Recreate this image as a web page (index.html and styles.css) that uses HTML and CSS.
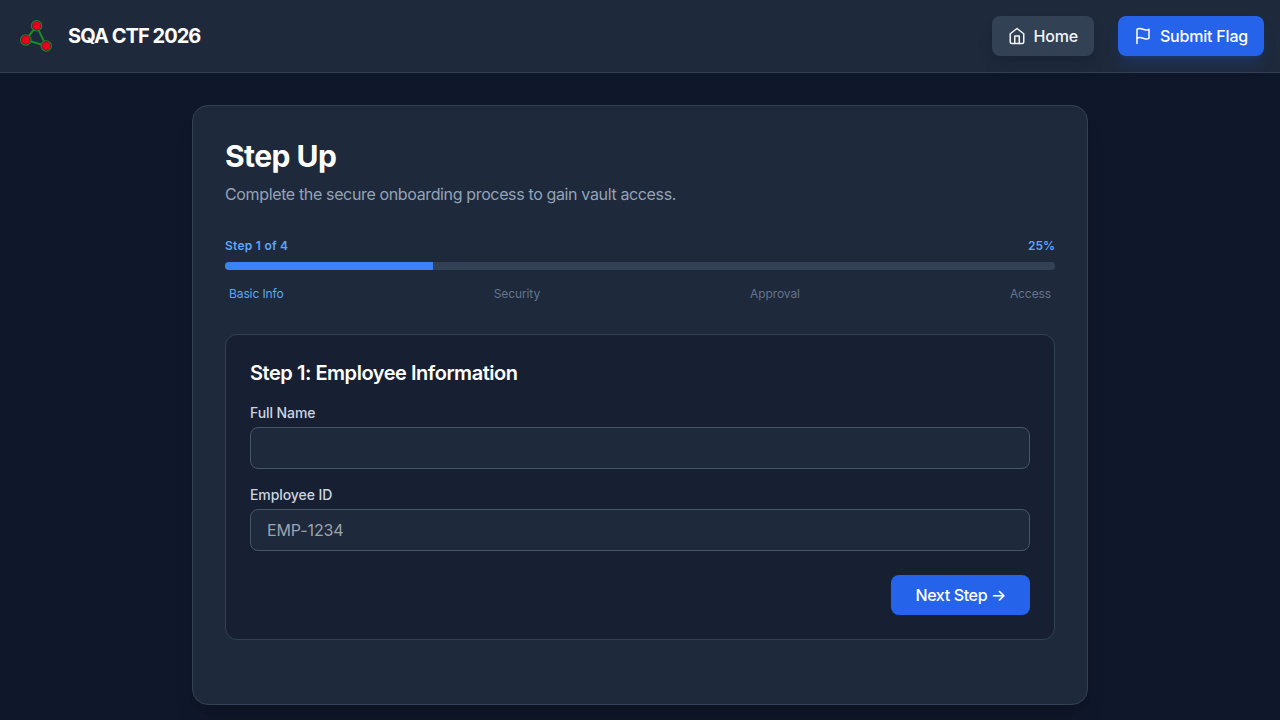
FILE: index.html
```html
<!DOCTYPE html>
<html lang="en">
<head>
  <meta charset="UTF-8" />
  <meta name="viewport" content="width=device-width, initial-scale=1.0" />
  <title>Step Up - SQA CTF 2026</title>
  <link rel="stylesheet" href="styles.css">
</head>
<body>
  <header class="navbar">
    <a href="#" class="brand">
      <svg class="logo" viewBox="0 0 40 40" fill="none">
        <path d="M20.6 9.8 L9.8 23.9 L30.2 30 Z" stroke="#1f8a26" stroke-width="2" />
        <g fill="#1e293b" stroke="#1f8a26" stroke-width="1.1">
          <circle cx="20.6" cy="9.8" r="5.2" />
          <circle cx="9.8" cy="23.9" r="5.2" />
          <circle cx="30.2" cy="30" r="5.2" />
        </g>
        <g fill="#e8001c">
          <circle cx="20.6" cy="9.8" r="4.1" />
          <circle cx="9.8" cy="23.9" r="4.1" />
          <circle cx="30.2" cy="30" r="4.1" />
        </g>
      </svg>
      <span>SQA CTF 2026</span>
    </a>
    <nav class="nav-links">
      <a href="#" class="btn btn-home">
        <svg class="icon" viewBox="0 0 24 24">
          <path d="M3 9l9-7 9 7v11a2 2 0 0 1-2 2H5a2 2 0 0 1-2-2z" />
          <path d="M9 22V12h6v10" />
        </svg>
        Home
      </a>
      <a href="#" class="btn btn-flag">
        <svg class="icon" viewBox="0 0 24 24">
          <path d="M4 15s1-1 4-1 5 2 8 2 4-1 4-1V3s-1 1-4 1-5-2-8-2-4 1-4 1z" />
          <path d="M4 22v-7" />
        </svg>
        Submit Flag
      </a>
    </nav>
  </header>

  <main class="container">
    <section class="card">
      <h1>Step Up</h1>
      <p class="subtitle">Complete the secure onboarding process to gain vault access.</p>

      <div class="progress">
        <div class="progress-head">
          <span class="step-count">Step 1 of 4</span>
          <span>25%</span>
        </div>
        <div class="progress-bar">
          <div class="progress-fill"></div>
        </div>
        <div class="progress-steps">
          <span class="active">Basic Info</span>
          <span>Security</span>
          <span>Approval</span>
          <span>Access</span>
        </div>
      </div>

      <form class="panel">
        <h2>Step 1: Employee Information</h2>
        <div class="field">
          <label for="fullName">Full Name</label>
          <input type="text" id="fullName">
        </div>
        <div class="field">
          <label for="employeeId">Employee ID</label>
          <input type="text" id="employeeId" placeholder="EMP-1234">
        </div>
        <div class="actions">
          <button type="button" class="btn-next">Next Step →</button>
        </div>
      </form>
    </section>
  </main>
</body>
</html>
```
FILE: styles.css
```css
* {
  box-sizing: border-box;
}
body {
  font-family: Inter, 'Liberation Sans', sans-serif;
  font-size: 16px;
  line-height: 24px;
  background: #0f172a;
  color: #fff;
  margin: 0;
  height: 100vh;
  overflow: hidden;
}
h1, h2, p {
  margin: 0;
}
a {
  color: inherit;
  text-decoration: none;
}
.navbar {
  display: flex;
  justify-content: space-between;
  align-items: center;
  height: 73px;
  padding: 0 16px;
  background: #1e293b;
  border-bottom: 1px solid #334155;
}
.brand {
  display: flex;
  align-items: center;
  gap: 12px;
  font-size: 20px;
  line-height: 28px;
  font-weight: 700;
  letter-spacing: -0.95px;
}
.logo {
  width: 40px;
  height: 40px;
}
.nav-links {
  display: flex;
  gap: 24px;
}
.btn {
  display: flex;
  align-items: center;
  gap: 8px;
  padding: 8px 16px;
  border-radius: 8px;
  font-weight: 500;
  letter-spacing: -0.2px;
}
.btn-home {
  background: #334155;
  color: #f1f5f9;
  box-shadow: 0 10px 15px -3px rgba(15, 23, 42, 0.2), 0 4px 6px -4px rgba(15, 23, 42, 0.2);
}
.btn-flag {
  background: #2563eb;
  box-shadow: 0 10px 15px -3px rgba(37, 99, 235, 0.2), 0 4px 6px -4px rgba(37, 99, 235, 0.2);
}
.icon {
  width: 18px;
  height: 18px;
  fill: none;
  stroke: currentColor;
  stroke-width: 2;
  stroke-linecap: round;
  stroke-linejoin: round;
}
.container {
  max-width: 896px;
  margin: 32px auto;
}
.card {
  min-height: 600px;
  padding: 32px;
  background: #1e293b;
  border: 1px solid #334155;
  border-radius: 16px;
  box-shadow: 0 20px 25px -5px rgba(0, 0, 0, 0.1), 0 8px 10px -6px rgba(0, 0, 0, 0.1);
}
h1 {
  font-size: 30px;
  line-height: 36px;
  font-weight: 700;
  letter-spacing: -0.55px;
}
.subtitle {
  margin-top: 8px;
  letter-spacing: -0.36px;
  color: #94a3b8;
}
.progress {
  margin: 32px 0;
  font-size: 12px;
  line-height: 16px;
}
.progress-head {
  display: flex;
  justify-content: space-between;
  color: #60a5fa;
  font-weight: 600;
}
.step-count {
  letter-spacing: 0.25px;
}
.progress-bar {
  height: 8px;
  margin: 8px 0 16px;
  background: #334155;
  border-radius: 4px;
  overflow: hidden;
}
.progress-fill {
  width: 25%;
  height: 100%;
  background: #3b82f6;
}
.progress-steps {
  display: flex;
  justify-content: space-between;
  padding: 0 4px;
  letter-spacing: -0.1px;
  color: #64748b;
}
.progress-steps .active {
  color: #60a5fa;
}
.panel {
  padding: 24px;
  background: rgba(15, 23, 42, 0.5);
  border: 1px solid #334155;
  border-radius: 12px;
}
h2 {
  margin-bottom: 16px;
  font-size: 20px;
  line-height: 28px;
  font-weight: 600;
  letter-spacing: -0.46px;
}
.field {
  margin-bottom: 16px;
}
label {
  display: block;
  margin-bottom: 4px;
  font-size: 14px;
  line-height: 20px;
  font-weight: 500;
  letter-spacing: -0.08px;
  color: #cbd5e1;
}
input {
  display: block;
  width: 100%;
  height: 42px;
  padding: 8px 16px;
  font: inherit;
  letter-spacing: -0.1px;
  color: #fff;
  background: #1e293b;
  border: 1px solid #475569;
  border-radius: 8px;
  outline: none;
}
input::placeholder {
  color: #9ca3af;
}
.actions {
  display: flex;
  justify-content: flex-end;
  padding-top: 8px;
}
.btn-next {
  padding: 8px 24px;
  font: inherit;
  font-weight: 500;
  letter-spacing: -0.36px;
  color: #fff;
  background: #2563eb;
  border: none;
  border-radius: 8px;
  cursor: pointer;
}
```
